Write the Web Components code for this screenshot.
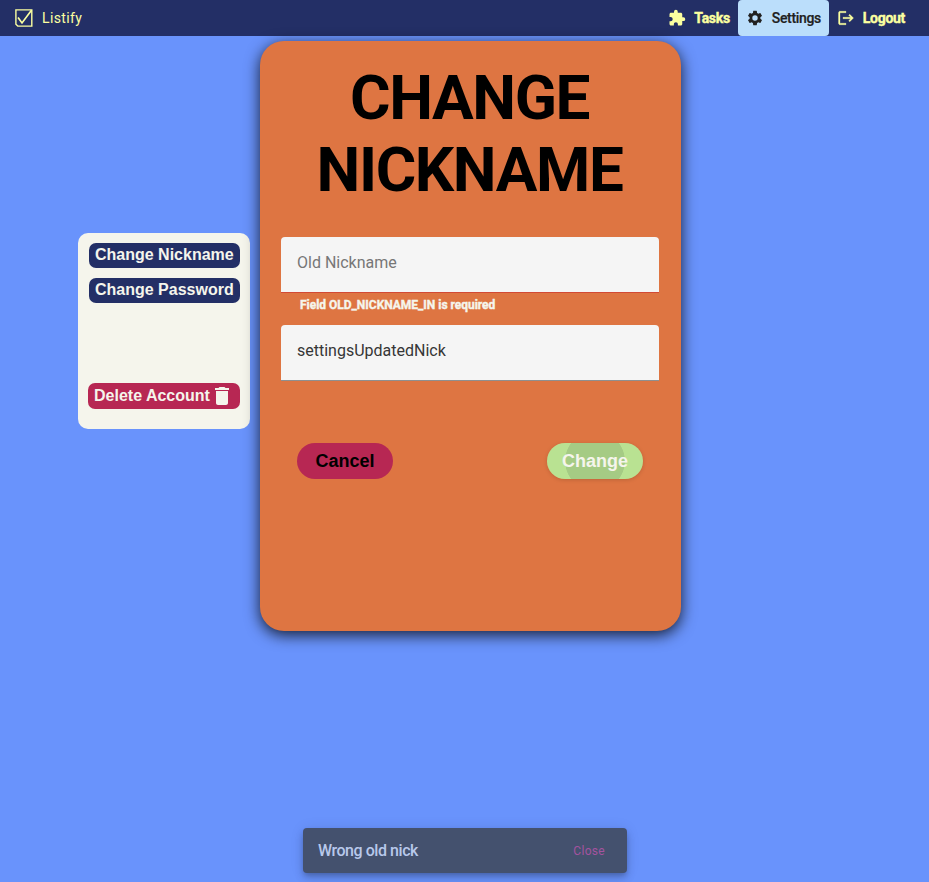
<!DOCTYPE html>
<html lang="en">
<head>
<meta charset="utf-8">
<title>Listify</title>
<style>
html,body{margin:0;height:100%}
body{background:#6993fc;font-family:Roboto,sans-serif;overflow:hidden}
</style>
</head>
<body>
<listify-app></listify-app>
<script>
function define(name, markup) {
  const t = document.createElement('template');
  t.innerHTML = markup;
  customElements.define(name, class extends HTMLElement {
    constructor() {
      super();
      this.attachShadow({mode: 'open'}).appendChild(t.content.cloneNode(true));
    }
  });
}

define('nav-link', `
<style>
:host{display:flex;align-items:center;height:36px;box-sizing:border-box;padding:0 8px;gap:8px;border-radius:4px;color:#fbffa0;font-size:14px;font-weight:700;letter-spacing:-.3px;-webkit-text-stroke:.4px currentColor}
:host([active]){width:91px;background:#bbdefb;color:#212121;font-weight:500;letter-spacing:-.35px;-webkit-text-stroke:.2px currentColor}
::slotted(svg){width:18px;height:18px;flex:none;fill:currentColor;display:block}
</style>
<slot name="icon"></slot><slot></slot>`);

define('app-bar', `
<style>
:host{display:flex;align-items:center;height:36px;box-sizing:border-box;background:#232f66;padding:0 16px 0 15px;color:#fbffa0}
.brand{display:flex;align-items:center;gap:9px;font-size:14px;letter-spacing:.38px}
.brand svg{width:18px;height:18px;display:block}
nav{display:flex;margin-left:auto}
</style>
<div class="brand"><svg viewBox="0 0 18 18" fill="none" stroke="currentColor" stroke-width="1.4"><path d="M.9.9h15.9v16.2H2.8L.9 15.2z"/><path d="M3 8.5l4 5.4L16.5 1.2" stroke-width="1.7"/></svg><span>Listify</span></div>
<nav><slot></slot></nav>`);

define('side-button', `
<style>
:host{display:flex;align-items:center;box-sizing:border-box;height:25px;width:151px;padding:0 6px 2px;border-radius:7px;background:#232f66;color:#f5f5ec;font:bold 16px "Liberation Sans",Arial,sans-serif;white-space:nowrap}
:host([danger]){background:#b72753;width:152px;height:26px;padding:0 6px 1px 6px}
::slotted(svg){width:24px;height:24px;fill:currentColor;position:relative;top:.5px}
</style>
<slot></slot>`);

define('side-panel', `
<style>
:host{display:flex;flex-direction:column;align-items:flex-end;gap:10px;box-sizing:border-box;width:172px;height:196px;background:#f5f5ec;border-radius:10px;padding:10px 10px 20px}
slot[name=bottom]{display:block;margin-top:auto}
</style>
<slot></slot><slot name="bottom"></slot>`);

define('text-field', `
<style>
:host{display:flex;box-sizing:border-box;height:56px;align-items:center;padding:0 16px 4px;background:#f5f5f5;border-radius:4px 4px 0 0;border-bottom:1px solid #8f8f8f;color:#363636;font-size:16px;font-weight:400;letter-spacing:0}
:host([invalid]){border-bottom-color:#d24a35;color:#777}
</style>
<slot></slot>`);

define('pill-button', `
<style>
:host{display:flex;align-items:center;justify-content:center;box-sizing:border-box;width:96px;height:36px;border-radius:18px;overflow:hidden;background:#b72753;color:#000;font:bold 18px "Liberation Sans",Arial,sans-serif}
:host([ripple]){color:#f5f5ec;background:radial-gradient(circle at 48px 18px,#a5cb84 29.5px,#b9e292 30.2px);box-shadow:0 1px 4px rgba(0,0,0,.15)}
</style>
<slot></slot>`);

define('settings-card', `
<style>
:host{display:flex;flex-direction:column;box-sizing:border-box;width:421px;height:590px;padding:21px;border-radius:24px;background:#de7542;box-shadow:0 4px 15px rgba(0,0,0,.8)}
h1{margin:0;padding-right:2px;text-align:center;font-size:62px;line-height:72px;font-weight:700;color:#000;letter-spacing:-1.4px}
.form{padding-top:31px;width:378px}
.error{height:32px;box-sizing:border-box;padding:4px 19px 0;font-size:12px;line-height:16px;font-weight:700;color:#f5f5ec;letter-spacing:-.02px;-webkit-text-stroke:.4px #f5f5ec}
.actions{display:flex;justify-content:space-between;padding:62px 16px 0}
</style>
<h1><slot name="title"></slot></h1>
<div class="form"><slot name="first"></slot><div class="error"><slot name="error"></slot></div><slot name="second"></slot>
<div class="actions"><slot name="actions"></slot></div></div>`);

define('snack-bar', `
<style>
:host{display:flex;align-items:center;justify-content:space-between;box-sizing:border-box;width:324px;height:45px;padding:0 22px 0 15px;border-radius:4px;background:#44516e;color:#b8c8eb;font-size:16px;letter-spacing:-.45px;font-weight:500;box-shadow:0 3px 5px -1px rgba(0,0,0,.2),0 6px 10px rgba(0,0,0,.12),0 1px 14px rgba(0,0,0,.1)}
::slotted([slot=action]){color:#a4539f;font-size:12px;font-weight:400;letter-spacing:.3px}
</style>
<slot></slot><slot name="action"></slot>`);

define('listify-app', `
<style>
:host{display:flex;flex-direction:column;height:882px}
main{display:flex;align-items:flex-start;gap:10px;padding:5px 0 0 78px}
side-panel{margin-top:192px}
footer{display:flex;margin-top:auto;padding:0 0 9px 303px}
</style>
<app-bar>
<nav-link><svg slot="icon" viewBox="0 0 24 24"><path d="M20.5 11H19V7c0-1.1-.9-2-2-2h-4V3.500a2.500 2.500 0 0 0-5 0V5H4c-1.100 0-1.990.9-1.990 2v3.800H3.500c1.490 0 2.700 1.210 2.700 2.700s-1.210 2.700-2.700 2.700H2V20c0 1.100.9 2 2 2h3.800v-1.500c0-1.490 1.210-2.700 2.700-2.700s2.700 1.210 2.700 2.700V22H17c1.100 0 2-.9 2-2v-4h1.500a2.500 2.500 0 0 0 0-5z"/></svg>Tasks</nav-link>
<nav-link active><svg slot="icon" viewBox="0 0 24 24"><path d="M19.140 12.940c.04-.3.060-.61.060-.94s-.02-.64-.07-.94l2.030-1.580a.49.49 0 0 0 .12-.61l-1.920-3.320a.488.488 0 0 0-.59-.22l-2.390.96c-.5-.38-1.030-.7-1.620-.94l-.36-2.540a.484.484 0 0 0-.48-.41h-3.840c-.24 0-.43.17-.47.41l-.36 2.540c-.59.24-1.130.57-1.620.94l-2.390-.96c-.22-.08-.47 0-.59.22L2.740 8.870c-.12.21-.08.47.12.61l2.030 1.580c-.05.3-.09.63-.09.940s.02.640.07.940l-2.030 1.580a.49.49 0 0 0-.12.610l1.920 3.320c.12.220.37.290.59.220l2.390-.96c.5.380 1.030.7 1.620.940l.36 2.540c.05.240.24.410.48.410h3.840c.24 0 .44-.17.470-.41l.36-2.540c.59-.24 1.130-.56 1.620-.94l2.390.96c.22.080.470 0 .59-.22l1.920-3.320c.12-.22.070-.47-.12-.61zM12 15.600A3.600 3.600 0 1 1 12 8.400a3.600 3.600 0 0 1 0 7.200z"/></svg>Settings</nav-link>
<nav-link><svg slot="icon" viewBox="0 0 24 24" stroke="currentColor" stroke-width=".4"><path d="M17 7l-1.410 1.410L18.170 11H8v2h10.170l-2.580 2.580L17 17l5-5zM4 5h8V3H4c-1.100 0-2 .9-2 2v14c0 1.100.9 2 2 2h8v-2H4z"/></svg>Logout</nav-link>
</app-bar>
<main>
<side-panel>
<side-button>Change Nickname</side-button>
<side-button>Change Password</side-button>
<side-button danger slot="bottom">Delete Account<svg viewBox="0 0 24 24"><path d="M6 19c0 1.100.9 2 2 2h8c1.100 0 2-.9 2-2V7H6v12zM19 4h-3.500l-1-1h-5l-1 1H5v2h14V4z"/></svg></side-button>
</side-panel>
<settings-card>
<span slot="title">CHANGE NICKNAME</span>
<text-field slot="first" invalid>Old Nickname</text-field>
<span slot="error">Field OLD_NICKNAME_IN is required</span>
<text-field slot="second">settingsUpdatedNick</text-field>
<pill-button slot="actions">Cancel</pill-button>
<pill-button slot="actions" ripple>Change</pill-button>
</settings-card>
</main>
<footer><snack-bar>Wrong old nick<span slot="action">Close</span></snack-bar></footer>`);
</script>
</body>
</html>
